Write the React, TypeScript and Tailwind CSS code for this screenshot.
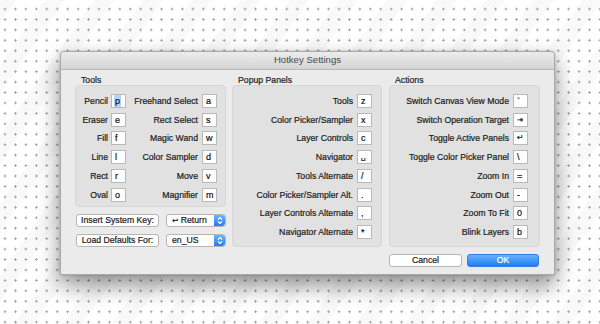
import React from "react";

const FONT = "font-['Liberation_Sans',Arial,sans-serif]";

function Key({ children }: { children: React.ReactNode }) {
  return (
    <div className="w-[15px] h-[14px] shrink-0 bg-white border border-[#b9b9b9] pl-[3px] text-[9px] leading-[12px] text-[#111] flex items-center">
      {children}
    </div>
  );
}

function Label({ children, className = "" }: { children: React.ReactNode; className?: string }) {
  return (
    <div className={"text-[8.7px] leading-[14px] text-[#1b1b1b] text-right whitespace-nowrap " + className}>
      {children}
    </div>
  );
}

const tools: [string, React.ReactNode, string, string][] = [
  ["Pencil", <span className="bg-[#b3d4fc] px-[1px] -ml-[1px]">p</span>, "Freehand Select", "a"],
  ["Eraser", "e", "Rect Select", "s"],
  ["Fill", "f", "Magic Wand", "w"],
  ["Line", "l", "Color Sampler", "d"],
  ["Rect", "r", "Move", "v"],
  ["Oval", "o", "Magnifier", "m"],
];

const popup: [string, React.ReactNode][] = [
  ["Tools", "z"],
  ["Color Picker/Sampler", "x"],
  ["Layer Controls", "c"],
  ["Navigator", <span className="text-[8px] font-['DejaVu_Sans',sans-serif]">␣</span>],
  ["Tools Alternate", "/"],
  ["Color Picker/Sampler Alt.", "."],
  ["Layer Controls Alternate", ","],
  ["Navigator Alternate", "*"],
];

const actions: [string, React.ReactNode][] = [
  ["Switch Canvas View Mode", "`"],
  ["Switch Operation Target", <span className="text-[7px] font-['DejaVu_Sans',sans-serif]">⇥</span>],
  ["Toggle Active Panels", <span className="text-[8px] font-['DejaVu_Sans',sans-serif]">↵</span>],
  ["Toggle Color Picker Panel", "\\"],
  ["Zoom In", "="],
  ["Zoom Out", "-"],
  ["Zoom To Fit", "0"],
  ["Blink Layers", "b"],
];

function Stepper() {
  return (
    <div className="w-[11px] h-full bg-gradient-to-b from-[#6cb3fa] to-[#1e7df0] rounded-r-[3px] flex items-center justify-center">
      <svg width="6" height="9" viewBox="0 0 6 9" fill="none" stroke="white" strokeWidth="1.1" strokeLinecap="round" strokeLinejoin="round">
        <path d="M1.2 3.4 L3 1.5 L4.8 3.4" />
        <path d="M1.2 5.6 L3 7.5 L4.8 5.6" />
      </svg>
    </div>
  );
}

function PopupBtn({ children }: { children: React.ReactNode }) {
  return (
    <div className="w-[60px] h-[13px] bg-white border border-[#b5b5b5] rounded-[3px] flex items-stretch overflow-hidden">
      <div className="flex-1 pl-[5px] text-[8.7px] leading-[11px] text-[#1b1b1b] whitespace-nowrap">{children}</div>
      <Stepper />
    </div>
  );
}

function PushBtn({ children, className = "" }: { children: React.ReactNode; className?: string }) {
  return (
    <div className={"h-[13px] bg-white border border-[#b5b5b5] rounded-[3px] text-[8.7px] leading-[11px] text-[#1b1b1b] text-center whitespace-nowrap " + className}>
      {children}
    </div>
  );
}

export default function App() {
  return (
    <div
      className={
        "w-[600px] h-[324px] overflow-hidden pt-[51px] pl-[60px] bg-white " +
        "bg-[radial-gradient(circle,#9c9c9c_0.9px,transparent_1.3px),repeating-linear-gradient(-55deg,rgba(0,0,0,0)_0px,rgba(0,0,0,0)_24px,rgba(0,0,0,0.022)_24px,rgba(0,0,0,0.022)_40px)] " +
        "bg-[size:10.45px_10.45px,auto] bg-[position:-0.2px_3.8px,0_0] " +
        FONT
      }
    >
      <div className="w-[495px] h-[224px] flex flex-col bg-[#ebebeb] border border-[#a9a9a9] rounded-t-[4px] shadow-[0_10px_22px_rgba(0,0,0,0.45),0_0_3px_rgba(0,0,0,0.2)] [-webkit-text-stroke:0.2px_currentColor]">
        {/* title bar */}
        <div className="h-[18px] shrink-0 border-b border-[#b8b8b8] bg-gradient-to-b from-[#ececec] to-[#d4d4d4] rounded-t-[4px] flex items-center justify-center text-[9.6px] text-[#4a4a4a] [-webkit-text-stroke:0px]">
          Hotkey Settings
        </div>

        {/* body */}
        <div className="flex pt-[5px] pl-[14px]">
          {/* Tools column */}
          <div className="w-[151px] flex flex-col">
            <div className="h-[10px] pl-[6px] text-[8.7px] leading-[10px] text-[#1b1b1b]">Tools</div>
            <div className="h-[122px] bg-[#e1e1e1] border border-[#d6d6d6] rounded-[4px] pt-[8px] pr-[8px] flex flex-col gap-[4.74px]">
              {tools.map(([a, ak, b, bk]) => (
                <div key={a} className="flex items-center h-[14px]">
                  <Label className="w-[32px] mr-[3px]">{a}</Label>
                  <Key>{ak}</Key>
                  <Label className="flex-1 mr-[4px]">{b}</Label>
                  <Key>{bk}</Key>
                </div>
              ))}
            </div>
            <div className="flex items-center mt-[7px] ml-[1px] gap-[7px]">
              <PushBtn className="w-[83px]">Insert System Key:</PushBtn>
              <PopupBtn>
                <span className="font-['DejaVu_Sans',sans-serif] text-[7.5px]">↩</span> Return
              </PopupBtn>
            </div>
            <div className="flex items-center mt-[7px] ml-[1px] gap-[7px]">
              <PushBtn className="w-[83px]">Load Defaults For:</PushBtn>
              <PopupBtn>en_US</PopupBtn>
            </div>
          </div>

          {/* Popup Panels column */}
          <div className="w-[150px] ml-[6px] flex flex-col">
            <div className="h-[10px] pl-[6px] text-[8.7px] leading-[10px] text-[#1b1b1b]">Popup Panels</div>
            <div className="h-[162px] bg-[#e1e1e1] border border-[#d6d6d6] rounded-[4px] pt-[8px] pr-[9px] flex flex-col gap-[4.74px]">
              {popup.map(([a, k]) => (
                <div key={a} className="flex items-center justify-end h-[14px]">
                  <Label className="mr-[4px]">{a}</Label>
                  <Key>{k}</Key>
                </div>
              ))}
            </div>
          </div>

          {/* Actions column */}
          <div className="w-[151px] ml-[7px] flex flex-col">
            <div className="h-[10px] pl-[6px] text-[8.7px] leading-[10px] text-[#1b1b1b]">Actions</div>
            <div className="h-[162px] bg-[#e1e1e1] border border-[#d6d6d6] rounded-[4px] pt-[8px] pr-[11px] flex flex-col gap-[4.74px]">
              {actions.map(([a, k]) => (
                <div key={a} className="flex items-center justify-end h-[14px]">
                  <Label className="mr-[4px]">{a}</Label>
                  <Key>{k}</Key>
                </div>
              ))}
            </div>
            <div className="flex mt-[7px] gap-[5px]">
              <PushBtn className="w-[73px]">Cancel</PushBtn>
              <div className="w-[72px] h-[13px] rounded-[3px] border border-[#2f7fe6] bg-gradient-to-b from-[#68b1fb] to-[#1b7cf2] text-white text-[8.7px] leading-[11px] text-center">
                OK
              </div>
            </div>
          </div>
        </div>
      </div>
    </div>
  );
}
